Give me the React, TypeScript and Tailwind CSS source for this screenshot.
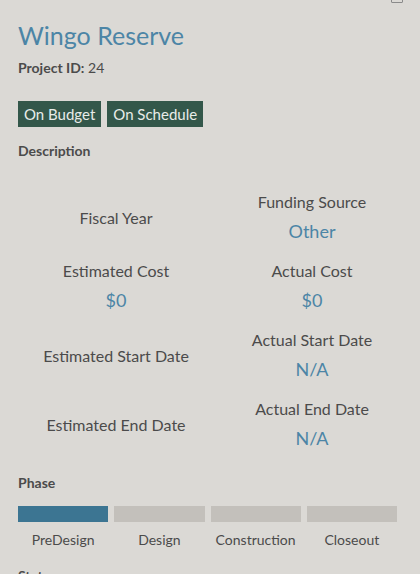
import React from "react";

const font = { fontFamily: "Lato, 'Noto Sans', sans-serif" };

function Cell({ label, value }: { label: string; value?: string }) {
  return (
    <div className="flex flex-col items-center justify-center h-[69px]">
      <div className="text-[16px] leading-[22px] text-[#4b4b4b]">{label}</div>
      {value && <div className="text-[18px] leading-[26px] mt-[5px] text-[#4c85a6]">{value}</div>}
    </div>
  );
}

export default function App() {
  const phases = ["PreDesign", "Design", "Construction", "Closeout"];
  return (
    <div className="w-[420px] h-[574px] bg-[#dbd9d5] overflow-hidden relative" style={font}>
      <div className="absolute right-[17px] top-[-8px] w-[12px] h-[11px] border border-[#8a8a8a] rounded-[1px]" />
      <div className="pl-[18px] pr-[12px] pt-[20px]">
        <h1 className="text-[25px] leading-[30px] text-[#4c85a6]">Wingo Reserve</h1>
        <div className="mt-[9px] text-[14px] leading-[18px] text-[#4b4b4b]">
          <span className="font-bold">Project ID:</span> 24
        </div>
        <div className="flex gap-[6px] mt-[24px]">
          <span className="bg-[#33574a] text-[#e8ece9] text-[15px] leading-[26px] px-[6px]">On Budget</span>
          <span className="bg-[#33574a] text-[#e8ece9] text-[15px] leading-[26px] px-[6px]">On Schedule</span>
        </div>
        <div className="mt-[14px] text-[14px] leading-[20px] font-bold text-[#4b4b4b]">Description</div>
        <div className="grid grid-cols-2 mt-[22px] mr-[-2px]">
          <Cell label="Fiscal Year" />
          <Cell label="Funding Source" value="Other" />
          <Cell label="Estimated Cost" value="$0" />
          <Cell label="Actual Cost" value="$0" />
          <Cell label="Estimated Start Date" />
          <Cell label="Actual Start Date" value="N/A" />
          <Cell label="Estimated End Date" />
          <Cell label="Actual End Date" value="N/A" />
        </div>
        <div className="mt-[14px] text-[14px] leading-[20px] font-bold text-[#4b4b4b]">Phase</div>
        <div className="flex gap-[6px] mt-[13px] w-[379px]">
          {phases.map((p, i) => (
            <div key={p} className="flex-1 flex flex-col items-center">
              <div className={`w-full h-[16px] ${i === 0 ? "bg-[#3c7592]" : "bg-[#c3c0bb]"}`} />
              <div className="mt-[9px] text-[14px] leading-[18px] text-[#4b4b4b]">{p}</div>
            </div>
          ))}
        </div>
        <div className="mt-[17px] text-[14px] leading-[20px] font-bold text-[#4b4b4b]">Status</div>
      </div>
    </div>
  );
}
